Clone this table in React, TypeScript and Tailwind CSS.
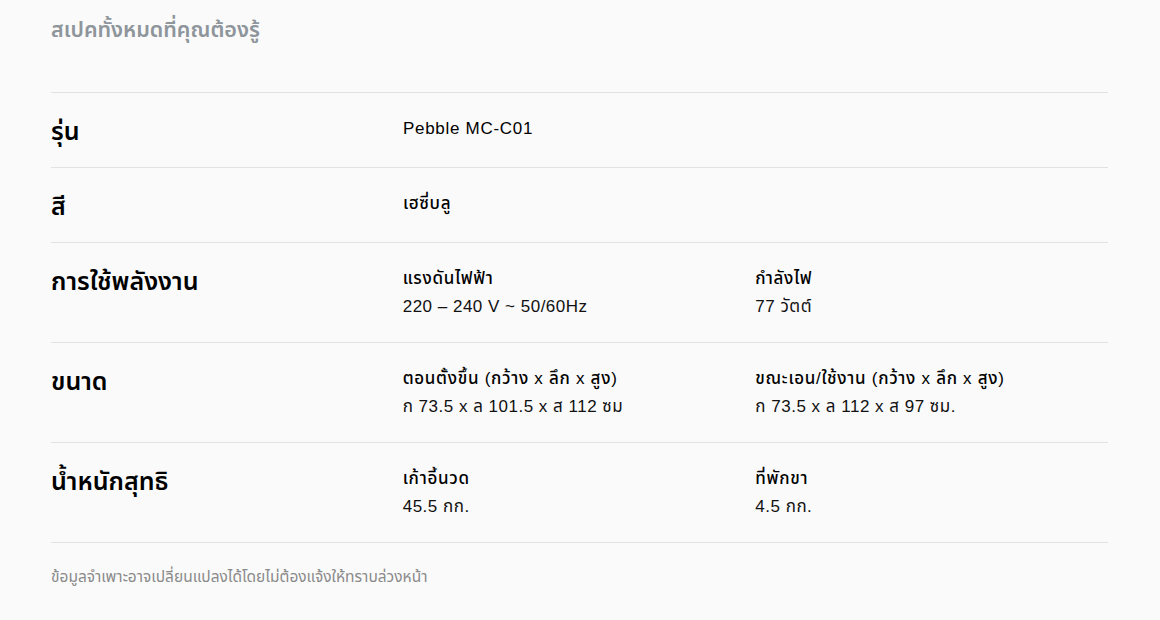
import React from "react";

type Cell = { title: string; value?: string };
type Row = { label: string; cells: Cell[]; tall: boolean };

const rows: Row[] = [
  { label: "รุ่น", cells: [{ title: "Pebble MC-C01" }], tall: false },
  { label: "สี", cells: [{ title: "เฮซี่บลู" }], tall: false },
  {
    label: "การใช้พลังงาน",
    cells: [
      { title: "แรงดันไฟฟ้า", value: "220 – 240 V ~ 50/60Hz" },
      { title: "กำลังไฟ", value: "77 วัตต์" },
    ],
    tall: true,
  },
  {
    label: "ขนาด",
    cells: [
      { title: "ตอนตั้งขึ้น (กว้าง x ลึก x สูง)", value: "ก 73.5 x ล 101.5 x ส 112 ซม" },
      { title: "ขณะเอน/ใช้งาน (กว้าง x ลึก x สูง)", value: "ก 73.5 x ล 112 x ส 97 ซม." },
    ],
    tall: true,
  },
  {
    label: "น้ำหนักสุทธิ",
    cells: [
      { title: "เก้าอี้นวด", value: "45.5 กก." },
      { title: "ที่พักขา", value: "4.5 กก." },
    ],
    tall: true,
  },
];

export default function App() {
  return (
    <div className="w-[1160px] h-[620px] bg-[#fafafa] px-[51px] overflow-hidden font-['Liberation_Sans','Noto_Sans_Thai',sans-serif]">
      <div className="pt-[14px] h-[92px]">
        <h2 className="text-[21.5px] leading-[32px] text-[#8e959b] font-semibold">สเปคทั้งหมดที่คุณต้องรู้</h2>
      </div>
      <div className="w-[1057px]">
        {rows.map((r) => (
          <div
            key={r.label}
            className={`flex border-t border-[#e2e2e2] pt-[22px] ${r.tall ? "h-[100px]" : "h-[75px]"}`}
          >
            <div className="w-[352px] text-[25px] leading-[32px] font-semibold text-black">{r.label}</div>
            {r.cells.map((c) => (
              <div key={c.title} className="w-[353px] text-[17px] leading-[28px] tracking-[0.5px] text-[#111]">
                <div className="font-medium text-black tracking-[0.7px]">{c.title}</div>
                {c.value && <div>{c.value}</div>}
              </div>
            ))}
          </div>
        ))}
        <div className="border-t border-[#e2e2e2] pt-[22px]">
          <p className="text-[15.5px] leading-[24px] text-[#8a8a8a]">
            ข้อมูลจำเพาะอาจเปลี่ยนแปลงได้โดยไม่ต้องแจ้งให้ทราบล่วงหน้า
          </p>
        </div>
      </div>
    </div>
  );
}
